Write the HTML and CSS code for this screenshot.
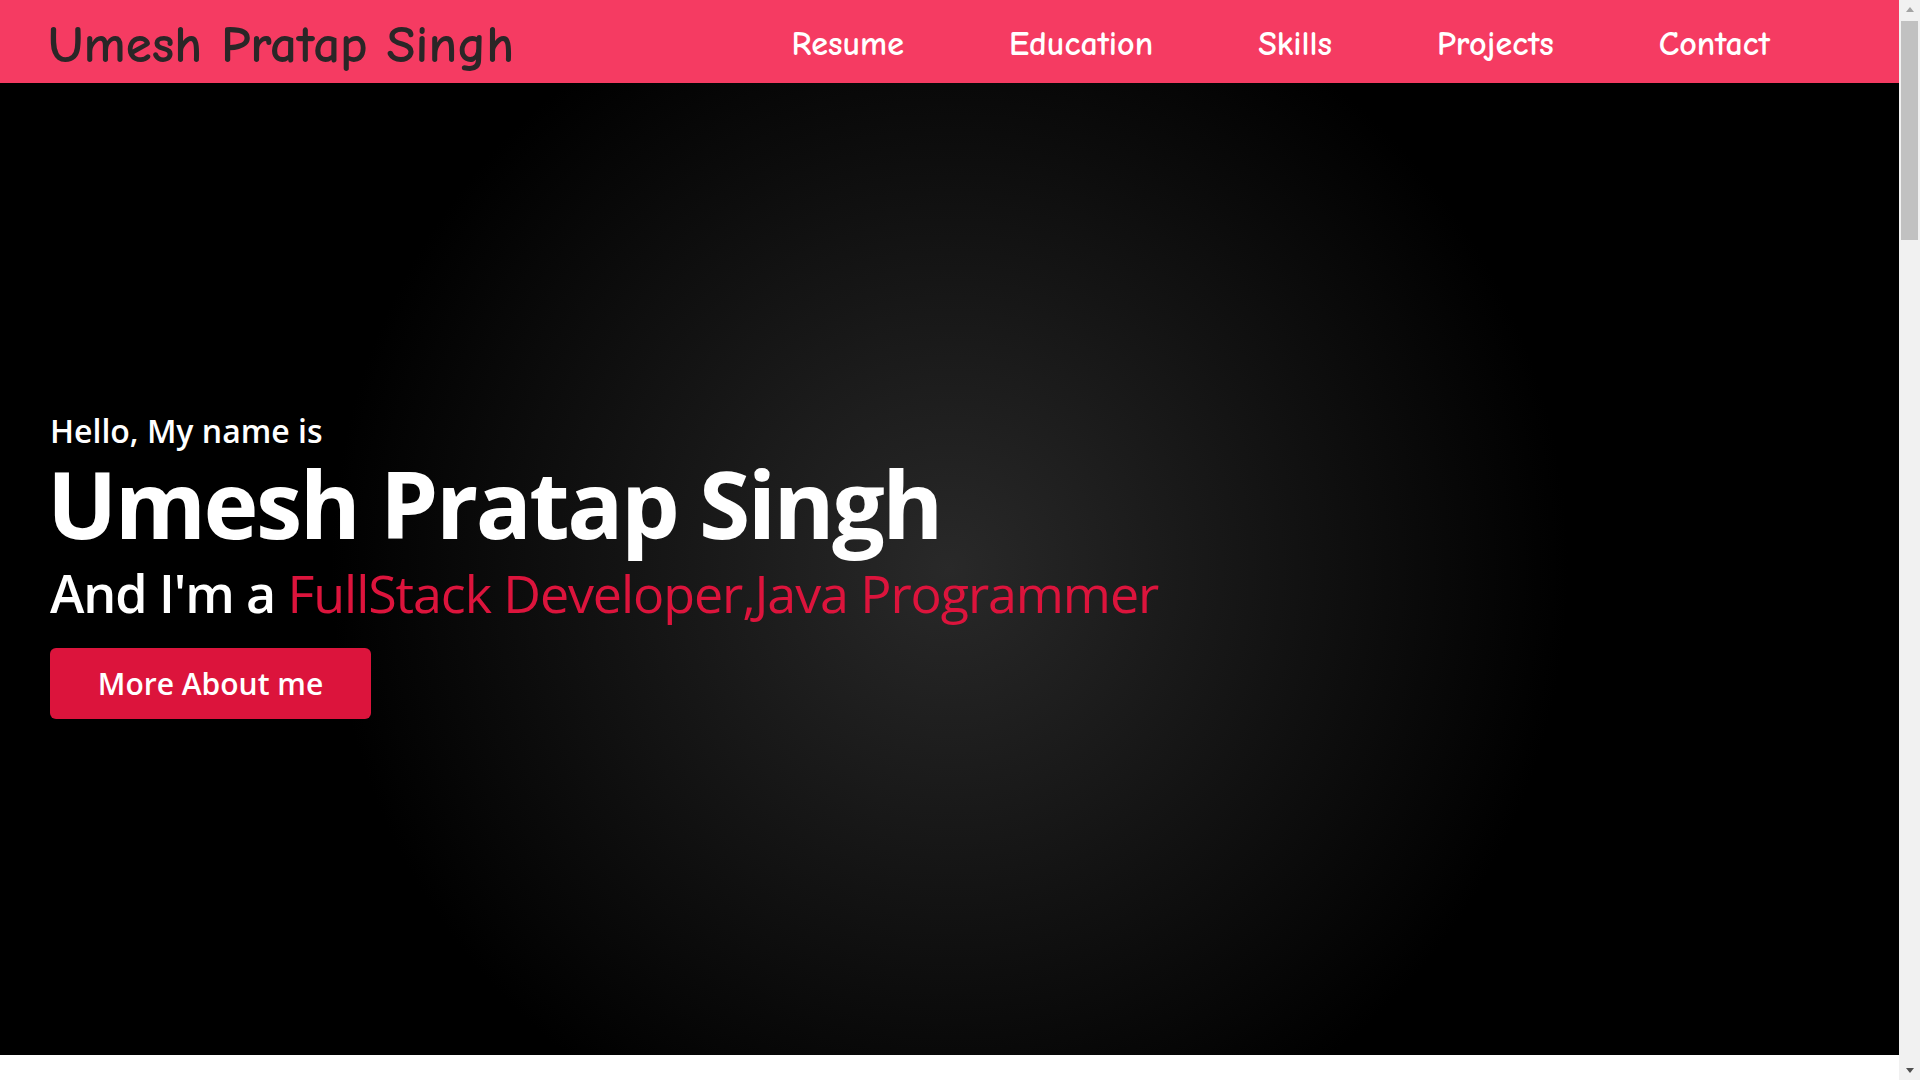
FILE: index.html
```html
<!DOCTYPE html>
<html lang="en">
<head>
<meta charset="utf-8">
<title>Umesh Pratap Singh</title>
<link rel="stylesheet" href="styles.css">
</head>
<body>
<div class="page">
  <header class="navbar">
    <div class="logo">Umesh Pratap Singh</div>
    <nav class="menu">
      <a href="#resume">Resume</a>
      <a href="#education">Education</a>
      <a href="#skills">Skills</a>
      <a href="#projects">Projects</a>
      <a href="#contact">Contact</a>
    </nav>
  </header>
  <section class="hero">
    <div class="hero-content">
      <div class="hello">Hello, My name is</div>
      <h1 class="name">Umesh Pratap Singh</h1>
      <div class="role"><span class="lead">And I'm a</span> <span class="typing">FullStack Developer,Java Programmer</span></div>
      <a class="btn" href="#about">More About me</a>
    </div>
  </section>
  <section class="block" id="resume"></section>
  <section class="block" id="education"></section>
  <section class="block" id="skills"></section>
  <section class="block" id="projects"></section>
  <section class="block" id="contact"></section>
</div>
<div class="scrollbar" aria-hidden="true">
  <div class="sb-btn"><span class="tri-up"></span></div>
  <div class="sb-track"><div class="sb-thumb"></div></div>
  <div class="sb-btn"><span class="tri-down"></span></div>
</div>
</body>
</html>
```
FILE: styles.css
```css
* { box-sizing: border-box; }
html { scrollbar-width: none; }
html::-webkit-scrollbar { display: none; }
html, body { margin: 0; padding: 0; }
body { background: #fff; font-family: "Open Sans", "Noto Sans", sans-serif; }
.page { margin-right: 21px; }

.scrollbar {
  position: fixed;
  top: 0;
  right: 0;
  width: 21px;
  height: 100vh;
  background: #f1f1f1;
  display: flex;
  flex-direction: column;
}
.sb-btn { height: 21px; display: flex; justify-content: center; align-items: center; }
.tri-up { width: 0; height: 0; border-left: 4.5px solid transparent; border-right: 4.5px solid transparent; border-bottom: 5px solid #a3a3a3; margin-top: -2px; }
.tri-down { width: 0; height: 0; border-left: 4.5px solid transparent; border-right: 4.5px solid transparent; border-top: 5px solid #505050; margin-top: 2px; }
.sb-track { flex: 1; padding: 0 2px; }
.sb-thumb { height: 219px; background: #c1c1c1; }

.navbar {
  height: 83px;
  background: #f53b62;
  display: flex;
  align-items: center;
  justify-content: space-between;
  padding: 0 129px 0 48px;
  font-family: "Comic Sans MS", "Comic Neue", "DejaVu Sans", cursive;
  font-weight: 700;
}
.logo { font-size: 53px; color: #2a2627; margin-top: 5px; }
.menu { display: flex; gap: 105px; margin-top: 4px; }
.menu a { color: #fff; text-decoration: none; font-size: 34px; }

.hero {
  height: 90vh;
  background: radial-gradient(circle, #292929 0%, #000 58%);
  display: flex;
  flex-direction: column;
  justify-content: center;
  padding: 0 50px 8px;
  color: #fff;
}
.hero-content { display: flex; flex-direction: column; align-items: flex-start; }
.hello { font-size: 32px; line-height: 40px; font-weight: 600; }
.name { margin: 2px 0 0 -3px; font-size: 93px; line-height: 100px; font-weight: 700; letter-spacing: -2.5px; }
.role { margin-top: 8px; font-size: 52px; line-height: 64px; font-weight: 400; letter-spacing: -1.1px; }
.lead { font-weight: 600; }
.typing { color: #dc143c; font-weight: 400; }
.btn {
  margin-top: 23px;
  display: inline-flex;
  align-items: center;
  justify-content: center;
  width: 321px;
  height: 71px;
  background: #dc143c;
  color: #fff;
  border-radius: 6px;
  text-decoration: none;
  font-size: 30px;
  font-weight: 600;
}
.block { min-height: 800px; background: #fff; }
```
